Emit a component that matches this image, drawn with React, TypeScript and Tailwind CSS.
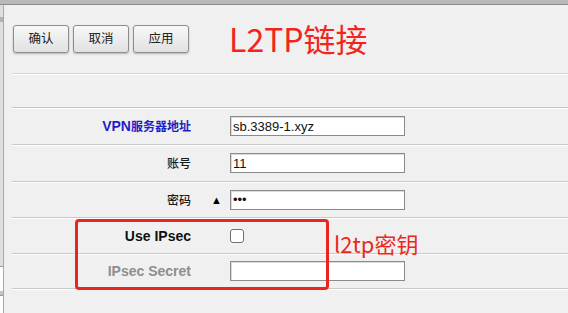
import React from 'react';

const cjk = "font-['Liberation_Sans','Noto_Sans_CJK_SC',sans-serif]";

const ToolButton: React.FC<{ label: string }> = ({ label }) => (
  <button
    className={`w-[56px] h-[28px] rounded-[3px] border border-[#8e8e8e] bg-gradient-to-b from-[#f8f8f8] to-[#e1e1e1] shadow-[0_1px_2px_rgba(0,0,0,0.25)] text-[12.5px] text-[#222] ${cjk}`}
  >
    {label}
  </button>
);

const TextInput: React.FC<{ value?: string }> = ({ value = '' }) => (
  <div className="w-[175px] h-[20px] border border-[#8a8a8a] bg-white shadow-[inset_1px_1px_0_#dcdcdc] flex items-center pl-[2px] text-[13px] leading-none text-[#111] font-['Liberation_Sans',sans-serif]">
    {value}
  </div>
);

interface RowProps {
  height: string;
  label: React.ReactNode;
  extra?: React.ReactNode;
  children?: React.ReactNode;
}

const Row: React.FC<RowProps> = ({ height, label, extra, children }) => (
  <div className={`${height} flex items-center border-b border-[#c9c9c9] shadow-[0_1px_0_#ffffff]`}>
    <div className={`w-[179px] text-right ${cjk}`}>{label}</div>
    <div className="w-[39px] flex justify-end pr-[8px]">{extra}</div>
    {children}
  </div>
);

export default function App() {
  return (
    <div className="w-[568px] h-[313px] overflow-hidden bg-[#f0f0f0] flex flex-col relative">
      {/* top frame */}
      <div className="h-[5px] shrink-0 bg-[#b9b9b9] border-b border-[#8b8b8b]" />

      <div className="flex flex-1">
        {/* left frame fragment */}
        <div className="w-[4px] shrink-0 flex flex-col border-r border-[#a9a9a9] bg-[#dedede]">
          <div className="h-[12px]" />
          <div className="h-[5px] bg-[#b2b2b2]" />
          <div className="flex-1" />
          <div className="h-[1px] bg-[#9a9a9a]" />
          <div className="h-[24px] bg-white" />
          <div className="h-[4px] bg-[#c4c4c4]" />
          <div className="h-[18px] bg-white border-t border-[#9a9a9a]" />
        </div>

        <div className="flex-1 flex flex-col pl-[8px]">
          {/* toolbar */}
          <div className="h-[69px] shrink-0 border-b border-[#d6d6d6] shadow-[0_1px_0_#ffffff] pt-[20px] pl-[1px]">
            <div className="flex items-start gap-[4px]">
              <ToolButton label="确认" />
              <ToolButton label="取消" />
              <ToolButton label="应用" />
              <div className="ml-[36px] -mt-[3px] text-[32px] leading-[32px] text-[#f3241c] font-['Noto_Sans_CJK_SC',sans-serif]">
                L2TP链接
              </div>
            </div>
          </div>

          {/* empty row */}
          <div className="h-[34px] shrink-0 border-b border-[#c4c4c4] shadow-[0_1px_0_#ffffff]" />

          <Row
            height="h-[37px]"
            label={
              <span className="text-[#1f1fc8] font-bold text-[14px]">
                VPN<span className="text-[12px]">服务器地址</span>
              </span>
            }
          >
            <TextInput value="sb.3389-1.xyz" />
          </Row>

          <Row height="h-[37px]" label={<span className="text-[12px] text-[#1a1a1a] font-medium">账号</span>}>
            <TextInput value="11" />
          </Row>

          <Row
            height="h-[36px]"
            label={<span className="text-[12px] text-[#1a1a1a] font-medium">密码</span>}
            extra={<span className="text-[11px] leading-none text-black">▲</span>}
          >
            <TextInput value="•••" />
          </Row>

          <Row height="h-[36px]" label={<span className="text-[14px] font-bold text-[#111]">Use IPsec</span>}>
            <div className="w-[14px] h-[14px] rounded-[3px] border border-[#707070] bg-white" />
          </Row>

          <Row height="h-[35px]" label={<span className="text-[14px] font-bold text-[#8e8e8e]">IPsec Secret</span>}>
            <TextInput />
          </Row>
        </div>
      </div>

      {/* annotations */}
      <div className="absolute left-[75px] top-[219px] w-[254px] h-[71px] border-[3px] border-[#e8261e] rounded-[4px]" />
      <div className="absolute left-[334px] top-[231px] text-[22px] leading-[24px] text-[#ea2a22] font-['Noto_Sans_CJK_SC',sans-serif]">
        l2tp密钥
      </div>
    </div>
  );
}
